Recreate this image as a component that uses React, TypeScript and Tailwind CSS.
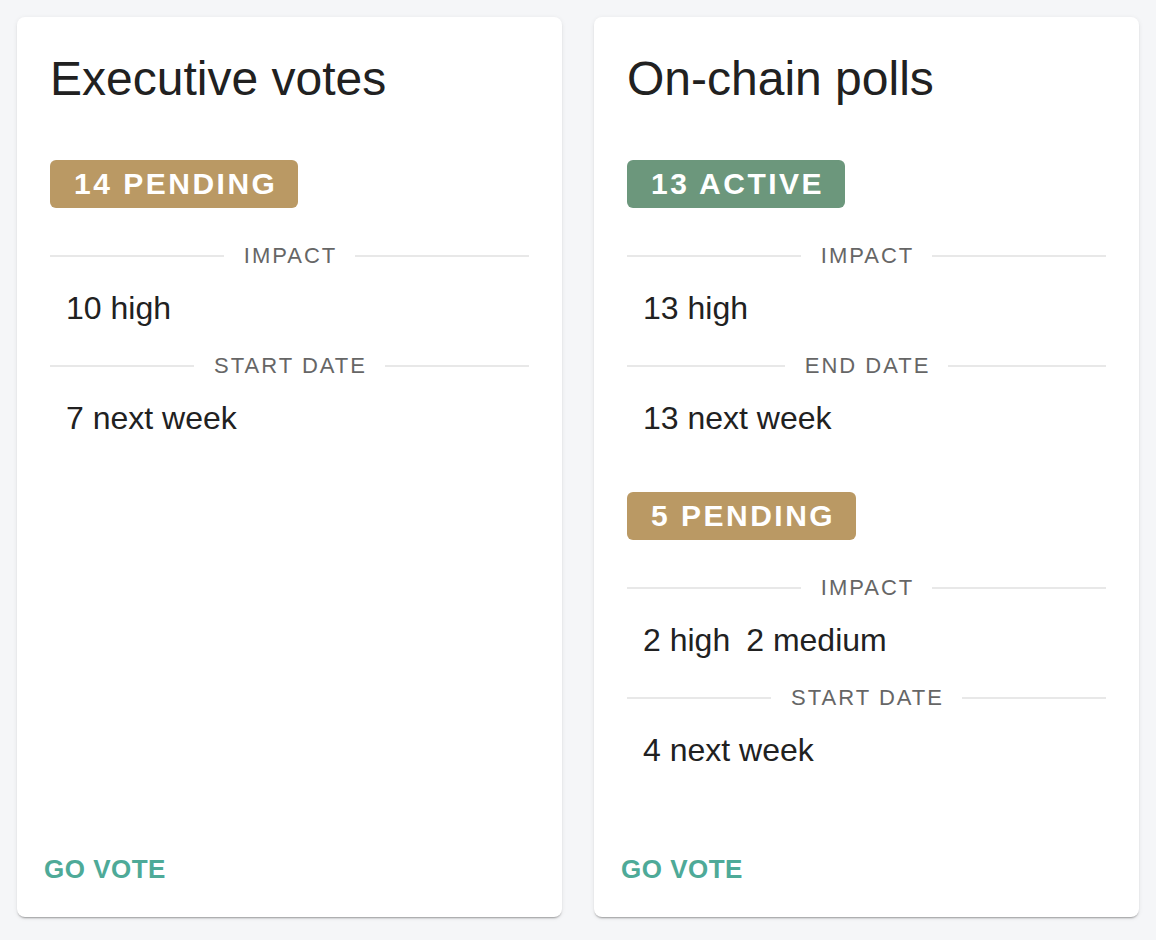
import React from "react"

type Group = {
  badge: string
  tone: "pending" | "active"
  rows: { label: string; values: string[] }[]
}

type CardData = {
  title: string
  groups: Group[]
}

const cards: CardData[] = [
  {
    title: "Executive votes",
    groups: [
      {
        badge: "14 PENDING",
        tone: "pending",
        rows: [
          { label: "IMPACT", values: ["10 high"] },
          { label: "START DATE", values: ["7 next week"] },
        ],
      },
    ],
  },
  {
    title: "On-chain polls",
    groups: [
      {
        badge: "13 ACTIVE",
        tone: "active",
        rows: [
          { label: "IMPACT", values: ["13 high"] },
          { label: "END DATE", values: ["13 next week"] },
        ],
      },
      {
        badge: "5 PENDING",
        tone: "pending",
        rows: [
          { label: "IMPACT", values: ["2 high", "2 medium"] },
          { label: "START DATE", values: ["4 next week"] },
        ],
      },
    ],
  },
]

function Divider({ label }: { label: string }) {
  return (
    <div className="flex h-6 items-center">
      <div className="h-[2px] flex-1 bg-[#e8e8e8]" />
      <span className="pl-[20px] pr-[18px] text-[22px] leading-6 tracking-[2px] text-[#666666]">
        {label}
      </span>
      <div className="h-[2px] flex-1 bg-[#e8e8e8]" />
    </div>
  )
}

function Badge({ text, tone }: { text: string; tone: Group["tone"] }) {
  return (
    <div className="flex">
      <span
        className={`h-12 rounded-[6px] pl-6 pr-[21px] text-[30px] font-bold leading-[48px] tracking-[2.5px] text-white ${
          tone === "active" ? "bg-[#6c977c]" : "bg-[#ba9964]"
        }`}
      >
        {text}
      </span>
    </div>
  )
}

function SummaryCard({ data }: { data: CardData }) {
  return (
    <div className="flex h-[900px] flex-col rounded-[8px] bg-white shadow-[0_2px_2px_-1px_rgba(0,0,0,0.35),0_1px_5px_0_rgba(0,0,0,0.08)]">
      <div className="px-[33px] pt-[34px]">
        <h2 className="text-[48px] leading-[56px] text-[#212121]">{data.title}</h2>

        {data.groups.map((group, gi) => (
          <div key={gi} className={gi === 0 ? "mt-[53px]" : "mt-[54px]"}>
            <Badge text={group.badge} tone={group.tone} />
            {group.rows.map((row, ri) => (
              <div key={ri} className={ri === 0 ? "mt-9" : "mt-[26px]"}>
                <Divider label={row.label} />
                <div className="mt-5 flex gap-4 pl-4 text-[32px] leading-10 text-[#212121]">
                  {row.values.map((v) => (
                    <span key={v}>{v}</span>
                  ))}
                </div>
              </div>
            ))}
          </div>
        ))}
      </div>

      <div className="mt-auto pb-8 pl-[27px]">
        <button className="text-[26px] font-bold leading-8 tracking-[0.5px] text-[#4eaa98]">
          GO VOTE
        </button>
      </div>
    </div>
  )
}

export default function App() {
  return (
    <div
      className="min-h-[940px] bg-[#f5f6f8] px-[17px] pt-[17px]"
      style={{ fontFamily: '"Liberation Sans", Arial, sans-serif' }}
    >
      <div className="grid grid-cols-2 gap-8">
        {cards.map((c) => (
          <SummaryCard key={c.title} data={c} />
        ))}
      </div>
    </div>
  )
}
